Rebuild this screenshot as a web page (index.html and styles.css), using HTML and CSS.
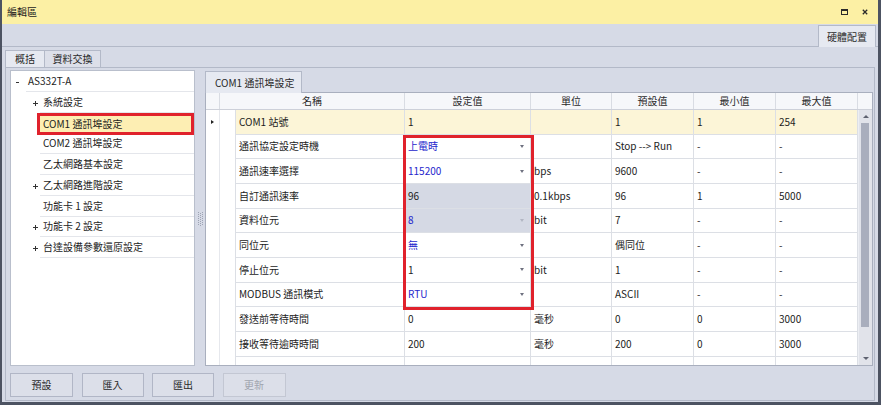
FILE: index.html
```html
<!DOCTYPE html>
<html>
<head>
<meta charset="utf-8">
<link rel="stylesheet" href="styles.css">
</head>
<body>
<div class="window">
  <div class="titlebar">
    <span class="title">編輯區</span>
    <span class="tb-icons">
      <svg class="ic" width="7" height="6" viewBox="0 0 7 6"><rect x="0.5" y="0.5" width="6" height="5" fill="none" stroke="#2b2b2b" stroke-width="1"/><rect x="0" y="0" width="7" height="2" fill="#2b2b2b"/></svg>
      <svg class="ic" width="6" height="6" viewBox="0 0 6 6"><path d="M0.8 0.8 L5.2 5.2 M5.2 0.8 L0.8 5.2" stroke="#2b2b2b" stroke-width="1.3"/></svg>
    </span>
  </div>
  <div class="topband">
    <div class="toptab">硬體配置</div>
  </div>
  <div class="main">
    <div class="tabstrip">
      <div class="tab tab-a active">概括</div>
      <div class="tab tab-b">資料交換</div>
    </div>
    <div class="page">
      <div class="content">
        <div class="tree">
          <div class="trow">
            <span class="sp-root"></span><span class="exp-root"><span class="minus"></span></span>
            <span class="lbl lbl-root">AS332T-A</span>
          </div>
          <div class="trow">
            <span class="sp-child"></span><span class="exp"><svg width="5" height="5" viewBox="0 0 5 5"><path d="M0 2.5 H5 M2.5 0 V5" stroke="#333" stroke-width="1"/></svg></span>
            <span class="lbl">系統設定</span>
          </div>
          <div class="trow">
            <span class="sp-child"></span><span class="exp"></span>
            <span class="lbl selected">COM1 通訊埠設定</span>
          </div>
          <div class="trow">
            <span class="sp-child"></span><span class="exp"></span>
            <span class="lbl">COM2 通訊埠設定</span>
          </div>
          <div class="trow">
            <span class="sp-child"></span><span class="exp"></span>
            <span class="lbl">乙太網路基本設定</span>
          </div>
          <div class="trow">
            <span class="sp-child"></span><span class="exp"><svg width="5" height="5" viewBox="0 0 5 5"><path d="M0 2.5 H5 M2.5 0 V5" stroke="#333" stroke-width="1"/></svg></span>
            <span class="lbl">乙太網路進階設定</span>
          </div>
          <div class="trow">
            <span class="sp-child"></span><span class="exp"></span>
            <span class="lbl">功能卡 1 設定</span>
          </div>
          <div class="trow">
            <span class="sp-child"></span><span class="exp"><svg width="5" height="5" viewBox="0 0 5 5"><path d="M0 2.5 H5 M2.5 0 V5" stroke="#333" stroke-width="1"/></svg></span>
            <span class="lbl">功能卡 2 設定</span>
          </div>
          <div class="trow">
            <span class="sp-child"></span><span class="exp"><svg width="5" height="5" viewBox="0 0 5 5"><path d="M0 2.5 H5 M2.5 0 V5" stroke="#333" stroke-width="1"/></svg></span>
            <span class="lbl">台達設備參數還原設定</span>
          </div>
        </div>
        <div class="splitter">
          <svg width="5" height="14" viewBox="0 0 5 14">
            <g fill="#9da3b3">
              <rect x="0" y="0" width="1" height="1"/><rect x="2" y="1" width="1" height="1"/><rect x="4" y="0" width="1" height="1"/>
              <rect x="0" y="2" width="1" height="1"/><rect x="2" y="3" width="1" height="1"/><rect x="4" y="2" width="1" height="1"/>
              <rect x="0" y="4" width="1" height="1"/><rect x="2" y="5" width="1" height="1"/><rect x="4" y="4" width="1" height="1"/>
              <rect x="0" y="6" width="1" height="1"/><rect x="2" y="7" width="1" height="1"/><rect x="4" y="6" width="1" height="1"/>
              <rect x="0" y="8" width="1" height="1"/><rect x="2" y="9" width="1" height="1"/><rect x="4" y="8" width="1" height="1"/>
              <rect x="0" y="10" width="1" height="1"/><rect x="2" y="11" width="1" height="1"/><rect x="4" y="10" width="1" height="1"/>
              <rect x="0" y="12" width="1" height="1"/><rect x="2" y="13" width="1" height="1"/><rect x="4" y="12" width="1" height="1"/>
            </g>
          </svg>
        </div>
        <div class="right">
          <div class="rtabs"><div class="rtab">COM1 通訊埠設定</div></div>
          <div class="grid">
            <div class="ghead">
              <div class="hc"></div>
              <div class="hc">名稱</div>
              <div class="hc">設定值</div>
              <div class="hc">單位</div>
              <div class="hc">預設值</div>
              <div class="hc">最小值</div>
              <div class="hc">最大值</div>
              <div class="hc last"></div>
            </div>
            <div class="gbody">
              <div class="rows">
                <div class="row focus">
                  <div class="ind"><span class="rowarrow"></span></div><div class="sp"></div>
                  <div class="c">COM1 站號</div><div class="c">1</div><div class="c"></div><div class="c">1</div><div class="c">1</div><div class="c">254</div>
                </div>
                <div class="row">
                  <div class="ind"></div><div class="sp"></div>
                  <div class="c">通訊協定設定時機</div><div class="c val blue">上電時<span class="dd"></span></div><div class="c"></div><div class="c">Stop --&gt; Run</div><div class="c">-</div><div class="c">-</div>
                </div>
                <div class="row">
                  <div class="ind"></div><div class="sp"></div>
                  <div class="c">通訊速率選擇</div><div class="c val blue">115200<span class="dd"></span></div><div class="c">bps</div><div class="c">9600</div><div class="c">-</div><div class="c">-</div>
                </div>
                <div class="row">
                  <div class="ind"></div><div class="sp"></div>
                  <div class="c">自訂通訊速率</div><div class="c val ro">96</div><div class="c">0.1kbps</div><div class="c">96</div><div class="c">1</div><div class="c">5000</div>
                </div>
                <div class="row">
                  <div class="ind"></div><div class="sp"></div>
                  <div class="c">資料位元</div><div class="c val ro blue">8<span class="dd faint"></span></div><div class="c">bit</div><div class="c">7</div><div class="c">-</div><div class="c">-</div>
                </div>
                <div class="row">
                  <div class="ind"></div><div class="sp"></div>
                  <div class="c">同位元</div><div class="c val blue">無<span class="dd"></span></div><div class="c"></div><div class="c">偶同位</div><div class="c">-</div><div class="c">-</div>
                </div>
                <div class="row">
                  <div class="ind"></div><div class="sp"></div>
                  <div class="c">停止位元</div><div class="c val">1<span class="dd"></span></div><div class="c">bit</div><div class="c">1</div><div class="c">-</div><div class="c">-</div>
                </div>
                <div class="row">
                  <div class="ind"></div><div class="sp"></div>
                  <div class="c">MODBUS 通訊模式</div><div class="c val blue">RTU<span class="dd"></span></div><div class="c"></div><div class="c">ASCII</div><div class="c">-</div><div class="c">-</div>
                </div>
                <div class="row">
                  <div class="ind"></div><div class="sp"></div>
                  <div class="c">發送前等待時間</div><div class="c">0</div><div class="c">毫秒</div><div class="c">0</div><div class="c">0</div><div class="c">3000</div>
                </div>
                <div class="row">
                  <div class="ind"></div><div class="sp"></div>
                  <div class="c">接收等待逾時時間</div><div class="c">200</div><div class="c">毫秒</div><div class="c">200</div><div class="c">0</div><div class="c">3000</div>
                </div>
                <div class="filler">
                  <div class="ind"></div><div class="sp"></div>
                  <div class="fc"></div><div class="fc"></div><div class="fc"></div><div class="fc"></div><div class="fc"></div><div class="fc"></div>
                </div>
              </div>
              <div class="scroll">
                <div class="sbtn up"><span class="tri-up"></span></div>
                <div class="thumb"></div>
                <div class="sfill"></div>
                <div class="sbtn down"><span class="tri-down"></span></div>
              </div>
            </div>
            <div class="redbox"></div>
          </div>
        </div>
      </div>
      <div class="buttons">
        <div class="btn w63">預設</div>
        <div class="btn w62">匯入</div>
        <div class="btn w62">匯出</div>
        <div class="btn w63 disabled">更新</div>
      </div>
    </div>
  </div>
</div>
</body>
</html>
```
FILE: styles.css
```css
* { box-sizing: border-box; }
html, body { margin: 0; padding: 0; }
body {
  background: #ffffff;
  font-family: "Noto Sans CJK TC", "Noto Sans", sans-serif;
  font-size: 10px;
  line-height: 12px;
  color: #1c1c1c;
}
.window {
  width: 881px;
  height: 405px;
  border-left: 2px solid #4d5362;
  border-right: 3px solid #4d5362;
  border-bottom: 3px solid #4d5362;
  display: flex;
  flex-direction: column;
}
.titlebar {
  height: 24px;
  flex: none;
  background: #fcf0a4;
  display: flex;
  align-items: center;
  padding-left: 5px;
  padding-right: 10px;
}
.title { flex: 1; }
.tb-icons { display: flex; align-items: center; gap: 14px; }
.ic { display: block; }

.topband {
  height: 23px;
  flex: none;
  background: #d6dae6;
  border-bottom: 1px solid #b3b9c8;
  display: flex;
  justify-content: flex-end;
  align-items: flex-end;
  padding-right: 2px;
}
.toptab {
  width: 58px;
  height: 22px;
  margin-bottom: -1px;
  background: #e6e9f1;
  border: 1px solid #b3b9c8;
  border-bottom: none;
  display: flex;
  align-items: center;
  justify-content: center;
  color: #2a2a2a;
}

.main {
  flex: 1;
  background: #d6dae6;
  display: flex;
  flex-direction: column;
}
.tabstrip {
  height: 20px;
  flex: none;
  display: flex;
  align-items: flex-end;
  padding-left: 3px;
}
.tab {
  height: 17px;
  border: 1px solid #b3b9c8;
  border-bottom: none;
  background: #dcdfe9;
  display: flex;
  align-items: center;
  justify-content: center;
  color: #2a2a2a;
}
.tab.active { background: #e6e9f1; }
.tab-a { width: 40px; }
.tab-b { width: 57px; margin-left: -1px; }

.page {
  flex: 1;
  margin: 0 3px 1px 3px;
  border: 1px solid #b3b9c8;
  display: flex;
  flex-direction: column;
}
.content {
  height: 298px;
  flex: none;
  padding: 2px 0 0 4px;
  display: flex;
}

.tree {
  width: 185px;
  height: 296px;
  flex: none;
  background: #ffffff;
  border: 1px solid #b9bfcc;
  display: flex;
  flex-direction: column;
}
.trow {
  height: 20.8px;
  flex: none;
  display: flex;
  align-items: stretch;
}
.sp-root { width: 5px; flex: none; }
.exp-root { width: 10px; flex: none; display: flex; align-items: center; padding-top: 3px; }
.minus { display: block; width: 3px; height: 1px; background: #333; }
.sp-child { width: 22px; flex: none; }
.exp { width: 7px; flex: none; display: flex; align-items: center; padding-top: 2px; }
.exp svg { display: block; }
.lbl {
  flex: 1;
  display: flex;
  align-items: center;
  padding-left: 3px;
  border-bottom: 1px solid #e4e6eb;
  white-space: nowrap;
}
.lbl-root { padding-left: 2px; }
.lbl.selected {
  margin-left: -3px;
  margin-top: 0.5px;
  height: 22px;
  border: 3px solid #e0222c;
  background: #fdeeb3;
  padding-left: 3px;
  position: relative;
  z-index: 1;
}

.splitter {
  width: 10px;
  flex: none;
  display: flex;
  align-items: center;
  justify-content: center;
  padding-top: 2px;
}
.splitter svg { display: block; }

.right {
  flex: 1;
  display: flex;
  flex-direction: column;
  padding-right: 1px;
}
.rtabs {
  height: 22px;
  flex: none;
  display: flex;
  align-items: flex-end;
}
.rtab {
  width: 97px;
  height: 22px;
  margin-bottom: -1px;
  position: relative;
  z-index: 1;
  background: #e6e9f1;
  border: 1px solid #b3b9c8;
  border-bottom: none;
  display: flex;
  align-items: center;
  padding-left: 9px;
  color: #2a2a2a;
  white-space: nowrap;
}

.grid {
  height: 274px;
  flex: none;
  position: relative;
  background: #ffffff;
  border: 1px solid #a9afbe;
  display: flex;
  flex-direction: column;
}
.ghead {
  height: 17px;
  flex: none;
  display: grid;
  grid-template-columns: 14px 185px 126px 81px 82px 82px 82px 14px;
  background: #f6f7fa;
  border-bottom: 1px solid #cdd0d9;
}
.hc {
  border-right: 1px solid #d9dce3;
  display: flex;
  align-items: center;
  justify-content: center;
  color: #2a2a2a;
}
.hc.last { border-right: none; }

.gbody { flex: 1; display: flex; min-height: 0; }
.rows { width: 652px; flex: none; display: flex; flex-direction: column; }
.row {
  height: 24.67px;
  flex: none;
  display: grid;
  grid-template-columns: 14px 16px 169px 126px 81px 82px 82px 82px;
}
.filler {
  flex: 1;
  display: grid;
  grid-template-columns: 14px 16px 169px 126px 81px 82px 82px 82px;
}
.ind {
  border-right: 1px solid #e6e8ed;
  display: flex;
  align-items: center;
  justify-content: center;
}
.sp { border-right: 1px solid #dcdfe5; }
.c {
  border-right: 1px solid #dcdfe5;
  border-bottom: 1px solid #dcdfe5;
  display: flex;
  align-items: center;
  padding-left: 3px;
  white-space: nowrap;
  overflow: hidden;
}
.fc { border-right: 1px solid #dcdfe5; }
.row.focus .c { background: #fcf5d7; }
.rowarrow {
  display: block;
  width: 0;
  height: 0;
  border-top: 2.5px solid transparent;
  border-bottom: 2.5px solid transparent;
  border-left: 3px solid #222;
}
.val { justify-content: space-between; padding-right: 6px; }
.blue { color: #2626cc; }
.ro { background: #d5d9e4; }
.dd {
  display: block;
  width: 0;
  height: 0;
  border-left: 2.5px solid transparent;
  border-right: 2.5px solid transparent;
  border-top: 3px solid #6f7280;
}
.dd.faint { border-top-color: #b2b6c3; }

.scroll {
  width: 14px;
  flex: none;
  background: #e1e3ea;
  border-left: 1px solid #eceef3;
  display: flex;
  flex-direction: column;
}
.sbtn { flex: none; display: flex; align-items: center; justify-content: center; }
.sbtn.up { height: 12px; }
.sbtn.down { height: 14px; }
.tri-up {
  display: block; width: 0; height: 0;
  border-left: 3px solid transparent;
  border-right: 3px solid transparent;
  border-bottom: 3px solid #5e6270;
}
.tri-down {
  display: block; width: 0; height: 0;
  border-left: 3px solid transparent;
  border-right: 3px solid transparent;
  border-top: 3px solid #5e6270;
}
.thumb {
  flex: none;
  height: 204px;
  width: 8px;
  margin: 1px 0 0 2px;
  background: #a9aebd;
}
.sfill { flex: 1; }

.redbox {
  position: absolute;
  left: 197px;
  top: 42px;
  width: 131px;
  height: 175px;
  border: 3px solid #e0222c;
  pointer-events: none;
}

.buttons {
  flex: 1;
  display: flex;
  gap: 8.5px;
  padding: 7px 0 0 4px;
}
.btn {
  height: 24px;
  background: #dcdfe9;
  border: 1px solid #b1b6c6;
  display: flex;
  align-items: center;
  justify-content: center;
  color: #2a2a2a;
}
.w63 { width: 63px; }
.w62 { width: 62px; }
.btn.disabled { color: #a0a4ae; border-color: #c3c7d3; }
```
